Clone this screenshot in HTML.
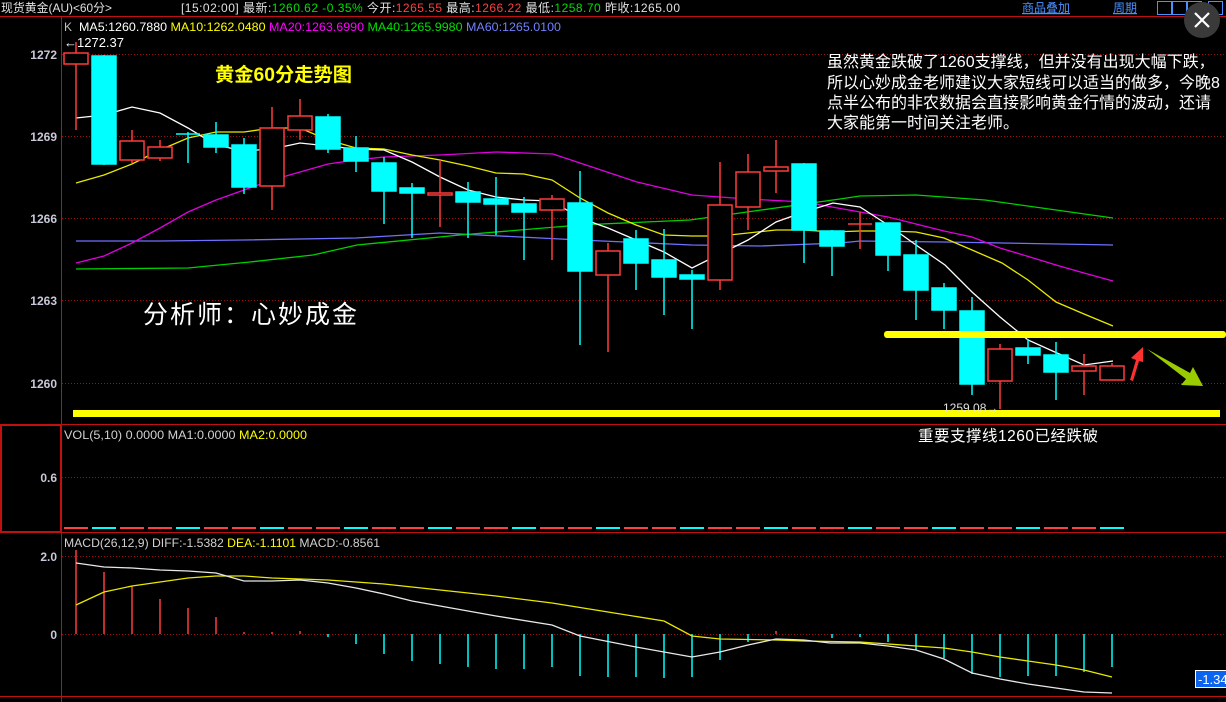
<!DOCTYPE html>
<html><head><meta charset="utf-8"><style>
body{margin:0;background:#000;width:1226px;height:702px;overflow:hidden;font-family:"Liberation Sans","Noto Sans CJK SC",sans-serif;}
svg{display:block}
text{font-family:"Liberation Sans","Noto Sans CJK SC",sans-serif;}
</style></head><body>
<svg width="1226" height="702" viewBox="0 0 1226 702" xmlns="http://www.w3.org/2000/svg">
<rect width="1226" height="702" fill="#000"/>
<!-- top bar -->
<g font-size="12">
<text x="1" y="12" fill="#e0e0e0" textLength="111" lengthAdjust="spacingAndGlyphs">现货黄金(AU)&lt;60分&gt;</text>
<text x="181" y="12" fill="#e0e0e0" textLength="499" lengthAdjust="spacing">[15:02:00] 最新:<tspan fill="#00e000">1260.62 -0.35%</tspan> 今开:<tspan fill="#ff4040">1265.55</tspan> 最高:<tspan fill="#ff4040">1266.22</tspan> 最低:<tspan fill="#00e000">1258.70</tspan> 昨收:1265.00</text>
<text x="1022" y="12" fill="#4a90ff" text-decoration="underline">商品叠加</text>
<text x="1113" y="12" fill="#4a90ff" text-decoration="underline">周期</text>
</g>
<rect x="1157.5" y="1.5" width="14" height="13" fill="none" stroke="#4a90ff"/>
<rect x="1172.5" y="1.5" width="14" height="13" fill="none" stroke="#4a90ff"/>
<rect x="1187.5" y="1.5" width="14" height="13" fill="none" stroke="#4a90ff"/>
<rect x="1208.5" y="1.5" width="14" height="13" fill="none" stroke="#4a90ff"/>
<line x1="0" y1="16.5" x2="1226" y2="16.5" stroke="#c01010" stroke-width="1"/>
<!-- frame -->
<line x1="61.5" y1="17" x2="61.5" y2="702" stroke="#c01010"/>
<line x1="0" y1="424.5" x2="1226" y2="424.5" stroke="#c01010"/>
<line x1="0" y1="532.5" x2="1226" y2="532.5" stroke="#c01010"/>
<line x1="0" y1="696.5" x2="1226" y2="696.5" stroke="#c01010"/>
<rect x="1" y="425" width="60" height="107" fill="none" stroke="#c01010" stroke-width="2"/>
<!-- grid -->
<g stroke="#a01010" stroke-dasharray="1,2">
<line x1="62" y1="54.5" x2="1226" y2="54.5"/><line x1="62" y1="136.5" x2="1226" y2="136.5"/>
<line x1="62" y1="218.5" x2="1226" y2="218.5"/><line x1="62" y1="300.5" x2="1226" y2="300.5"/>
<line x1="62" y1="383.5" x2="1226" y2="383.5"/><line x1="62" y1="477.5" x2="1226" y2="477.5"/>
<line x1="62" y1="556.5" x2="1226" y2="556.5"/><line x1="62" y1="634.5" x2="1226" y2="634.5"/>
</g>
<g font-size="12" font-weight="bold" fill="#c8c8d8" text-anchor="end">
<text x="57" y="59">1272</text><text x="57" y="141">1269</text><text x="57" y="223">1266</text>
<text x="57" y="305">1263</text><text x="57" y="388">1260</text><text x="57" y="482">0.6</text>
<text x="57" y="561">2.0</text><text x="57" y="639">0</text>
</g>
<!-- MA legend -->
<g font-size="12">
<text x="64" y="31" fill="#c0c0c0">K</text>
<text x="79" y="31" fill="#ffffff" textLength="482" lengthAdjust="spacingAndGlyphs">MA5:1260.7880 <tspan fill="#ffff00">MA10:1262.0480</tspan> <tspan fill="#ff00ff">MA20:1263.6990</tspan> <tspan fill="#00e000">MA40:1265.9980</tspan> <tspan fill="#7080ff">MA60:1265.0100</tspan></text>
<text x="64" y="47" fill="#ffffff" font-size="13">←1272.37</text>
<text x="64" y="439" fill="#d0d0d0" textLength="243" lengthAdjust="spacingAndGlyphs">VOL(5,10) 0.0000 MA1:0.0000 <tspan fill="#ffff00">MA2:0.0000</tspan></text>
<text x="64" y="547" fill="#d0d0d0" textLength="316" lengthAdjust="spacingAndGlyphs">MACD(26,12,9) DIFF:-1.5382 <tspan fill="#ffff00">DEA:-1.1101</tspan> MACD:-0.8561</text>
</g>
<!-- MA lines -->
<g fill="none" stroke-width="1.3">
<polyline stroke="#7070ff" points="76,241 160,241 244,240 356,238 440,233 580,240 692,245 760,246 840,243 860,241 945,242 1113,245"/>
<polyline stroke="#00d000" points="76,269 188,268 250,262 313,255 357,245 460,235 580,225 690,220 740,213 840,199 860,196 916,195 985,200 1113,218"/>
<polyline stroke="#e000e0" points="76,263 104,256 132,243 160,228 188,212 216,200 244,190 272,180 300,172 328,164 356,160 384,157 412,156 440,155 496,152 553,154 580,163 637,182 692,195 748,199 804,202 832,207 860,212 888,217 916,224 944,231 972,237 1000,248 1030,257 1056,265 1084,273 1113,281"/>
<polyline stroke="#e8e800" points="76,183 104,175 132,164 160,150 188,138 216,132 244,132 272,128 300,128 328,140 356,148 384,149 412,155 440,160 468,166 496,173 524,174 552,180 580,198 608,213 636,225 664,235 692,236 720,236 748,233 776,230 804,230 832,232 860,231 888,231 916,232 944,238 972,250 1002,263 1028,280 1056,302 1084,314 1113,326"/>
<polyline stroke="#ffffff" points="76,118 104,115 132,107 160,113 188,128 216,145 244,151 272,149 300,143 328,146 356,149 384,150 412,162 440,177 468,190 496,197 524,200 552,201 580,218 608,228 636,240 664,252 692,268 720,254 748,240 776,222 804,212 833,203 860,207 888,225 916,245 945,265 972,292 1000,317 1028,340 1057,353 1084,365 1113,361"/>
</g>
<!-- candles -->
<g stroke-width="1.5">
<g stroke="#ff3b3b" fill="#000">
<line x1="76" y1="42" x2="76" y2="130"/><rect x="64" y="53" width="24" height="11"/>
<line x1="132" y1="130" x2="132" y2="163"/><rect x="120" y="141" width="24" height="19"/>
<line x1="160" y1="140" x2="160" y2="161"/><rect x="148" y="147" width="24" height="11"/>
<line x1="272" y1="107" x2="272" y2="210"/><rect x="260" y="128" width="24" height="58"/>
<line x1="300" y1="99" x2="300" y2="140"/><rect x="288" y="116" width="24" height="14"/>
<line x1="440" y1="160" x2="440" y2="227"/><rect x="428" y="193" width="24" height="2"/>
<line x1="552" y1="195" x2="552" y2="260"/><rect x="540" y="199" width="24" height="11"/>
<line x1="608" y1="243" x2="608" y2="352"/><rect x="596" y="251" width="24" height="24"/>
<line x1="720" y1="162" x2="720" y2="290"/><rect x="708" y="205" width="24" height="75"/>
<line x1="748" y1="154" x2="748" y2="230"/><rect x="736" y="172" width="24" height="35"/>
<line x1="776" y1="140" x2="776" y2="193"/><rect x="764" y="167" width="24" height="4"/>
<line x1="860" y1="212" x2="860" y2="249"/><line x1="848" y1="224" x2="872" y2="224"/>
<line x1="1000" y1="344" x2="1000" y2="409"/><rect x="988" y="349" width="24" height="32"/>
<line x1="1084" y1="354" x2="1084" y2="395"/><rect x="1072" y="366" width="24" height="5"/>
<line x1="1112" y1="363" x2="1112" y2="380"/><rect x="1100" y="366" width="24" height="14"/>
</g>
<g stroke="#00ffff" fill="#00ffff">
<line x1="104" y1="55" x2="104" y2="165"/><rect x="92" y="56" width="24" height="108"/>
<line x1="188" y1="132" x2="188" y2="163"/><line x1="176" y1="134" x2="200" y2="134"/>
<line x1="216" y1="122" x2="216" y2="153"/><rect x="204" y="135" width="24" height="12"/>
<line x1="244" y1="138" x2="244" y2="194"/><rect x="232" y="145" width="24" height="42"/>
<line x1="328" y1="114" x2="328" y2="153"/><rect x="316" y="117" width="24" height="32"/>
<line x1="356" y1="136" x2="356" y2="172"/><rect x="344" y="148" width="24" height="13"/>
<line x1="384" y1="157" x2="384" y2="224"/><rect x="372" y="163" width="24" height="28"/>
<line x1="412" y1="183" x2="412" y2="238"/><rect x="400" y="188" width="24" height="5"/>
<line x1="468" y1="182" x2="468" y2="238"/><rect x="456" y="192" width="24" height="10"/>
<line x1="496" y1="177" x2="496" y2="235"/><rect x="484" y="199" width="24" height="5"/>
<line x1="524" y1="197" x2="524" y2="260"/><rect x="512" y="204" width="24" height="8"/>
<line x1="580" y1="171" x2="580" y2="345"/><rect x="568" y="203" width="24" height="68"/>
<line x1="636" y1="230" x2="636" y2="290"/><rect x="624" y="239" width="24" height="24"/>
<line x1="664" y1="229" x2="664" y2="315"/><rect x="652" y="260" width="24" height="17"/>
<line x1="692" y1="270" x2="692" y2="329"/><rect x="680" y="275" width="24" height="4"/>
<line x1="804" y1="163" x2="804" y2="263"/><rect x="792" y="164" width="24" height="66"/>
<line x1="832" y1="230" x2="832" y2="276"/><rect x="820" y="231" width="24" height="15"/>
<line x1="888" y1="223" x2="888" y2="271"/><rect x="876" y="223" width="24" height="32"/>
<line x1="916" y1="240" x2="916" y2="320"/><rect x="904" y="255" width="24" height="35"/>
<line x1="944" y1="283" x2="944" y2="329"/><rect x="932" y="288" width="24" height="22"/>
<line x1="972" y1="297" x2="972" y2="395"/><rect x="960" y="311" width="24" height="73"/>
<line x1="1028" y1="339" x2="1028" y2="364"/><rect x="1016" y="348" width="24" height="7"/>
<line x1="1056" y1="342" x2="1056" y2="400"/><rect x="1044" y="355" width="24" height="17"/>
</g>
</g>
<!-- yellow support lines -->
<rect x="884" y="331" width="342" height="7" rx="3" fill="#ffff00"/>
<rect x="73" y="410" width="1147" height="7" fill="#ffff00"/>
<text x="943" y="412" font-size="12" fill="#e0e0e0">1259.08→</text>
<!-- arrows -->
<polygon points="1130,380 1136,360 1131,358 1143,347 1143,362 1139,361 1133,381" fill="#ff3030"/>
<polygon points="1147,349 1190,373 1193,367 1203,386 1181,385 1186,379" fill="#99cc00"/>
<!-- titles -->
<text x="215" y="81" font-size="19" font-weight="bold" fill="#ffff00" textLength="137" lengthAdjust="spacingAndGlyphs">黄金60分走势图</text>
<text x="143" y="323" font-size="25" fill="#ffffff" textLength="214" lengthAdjust="spacing">分析师：心妙成金</text>
<g font-size="16" fill="#ffffff">
<text x="827" y="67">虽然黄金跌破了1260支撑线，但并没有出现大幅下跌，</text>
<text x="827" y="88">所以心妙成金老师建议大家短线可以适当的做多，今晚8</text>
<text x="827" y="108">点半公布的非农数据会直接影响黄金行情的波动，还请</text>
<text x="827" y="128">大家能第一时间关注老师。</text>
</g>
<text x="918" y="441" font-size="15.5" fill="#ffffff" textLength="180" lengthAdjust="spacing">重要支撑线1260已经跌破</text>
<!-- volume tiny bars -->
<line x1="64" y1="528" x2="1124" y2="528" stroke="#ff4040" stroke-width="2" stroke-dasharray="24,4"/>
<line x1="92" y1="528" x2="1124" y2="528" stroke="#00ffff" stroke-width="2" stroke-dasharray="24,60"/>
<!-- MACD histogram -->
<g stroke-width="1.5">
<g stroke="#ff3b3b">
<line x1="76" y1="550" x2="76" y2="634"/><line x1="104" y1="572" x2="104" y2="634"/>
<line x1="132" y1="586" x2="132" y2="634"/><line x1="160" y1="599" x2="160" y2="634"/>
<line x1="188" y1="608" x2="188" y2="634"/><line x1="216" y1="617" x2="216" y2="634"/>
<line x1="244" y1="632" x2="244" y2="634"/><line x1="272" y1="632" x2="272" y2="634"/>
<line x1="300" y1="631" x2="300" y2="634"/><line x1="776" y1="631" x2="776" y2="634"/>
</g>
<g stroke="#00ffff">
<line x1="328" y1="634" x2="328" y2="637"/><line x1="356" y1="634" x2="356" y2="644"/>
<line x1="384" y1="634" x2="384" y2="654"/><line x1="412" y1="634" x2="412" y2="661"/>
<line x1="440" y1="634" x2="440" y2="664"/><line x1="468" y1="634" x2="468" y2="667"/>
<line x1="496" y1="634" x2="496" y2="669"/><line x1="524" y1="634" x2="524" y2="669"/>
<line x1="552" y1="634" x2="552" y2="667"/><line x1="580" y1="634" x2="580" y2="676"/>
<line x1="608" y1="634" x2="608" y2="677"/><line x1="636" y1="634" x2="636" y2="677"/>
<line x1="664" y1="634" x2="664" y2="678"/><line x1="692" y1="634" x2="692" y2="677"/>
<line x1="720" y1="634" x2="720" y2="660"/><line x1="748" y1="634" x2="748" y2="642"/>
<line x1="832" y1="634" x2="832" y2="638"/><line x1="860" y1="634" x2="860" y2="637"/>
<line x1="888" y1="634" x2="888" y2="642"/><line x1="916" y1="634" x2="916" y2="650"/>
<line x1="944" y1="634" x2="944" y2="658"/><line x1="972" y1="634" x2="972" y2="674"/>
<line x1="1000" y1="634" x2="1000" y2="677"/><line x1="1028" y1="634" x2="1028" y2="676"/>
<line x1="1056" y1="634" x2="1056" y2="676"/><line x1="1084" y1="634" x2="1084" y2="672"/>
<line x1="1112" y1="634" x2="1112" y2="667"/>
</g>
</g>
<g fill="none" stroke-width="1.3">
<polyline stroke="#e8e800" points="76,605 104,592 132,586 160,582 188,578 216,576 244,576 272,578 300,579 328,580 356,582 384,584 440,590 496,596 552,603 608,612 664,621 692,636 720,639 776,640 804,641 860,642 916,646 944,648 972,652 1000,657 1028,661 1056,665 1084,670 1112,677"/>
<polyline stroke="#e8e8e8" points="76,563 104,567 132,568 160,570 188,571 216,573 244,581 272,581 300,580 328,583 356,588 384,594 412,601 440,606 468,611 496,616 552,625 580,636 636,647 692,657 720,652 748,645 776,639 804,640 830,643 860,643 888,646 916,650 944,659 972,673 1000,679 1028,684 1056,688 1084,692 1112,693"/>
</g>
<rect x="1195.5" y="670.5" width="32" height="17" fill="#0a64f0" stroke="#fff"/>
<text x="1198" y="684" font-size="13" fill="#fff">-1.34</text>
<!-- close button -->
<circle cx="1202" cy="20" r="18" fill="#3a3a3a"/>
<path d="M1195 13 L1209 27 M1209 13 L1195 27" stroke="#fff" stroke-width="2.2"/>
</svg>
</body></html>
